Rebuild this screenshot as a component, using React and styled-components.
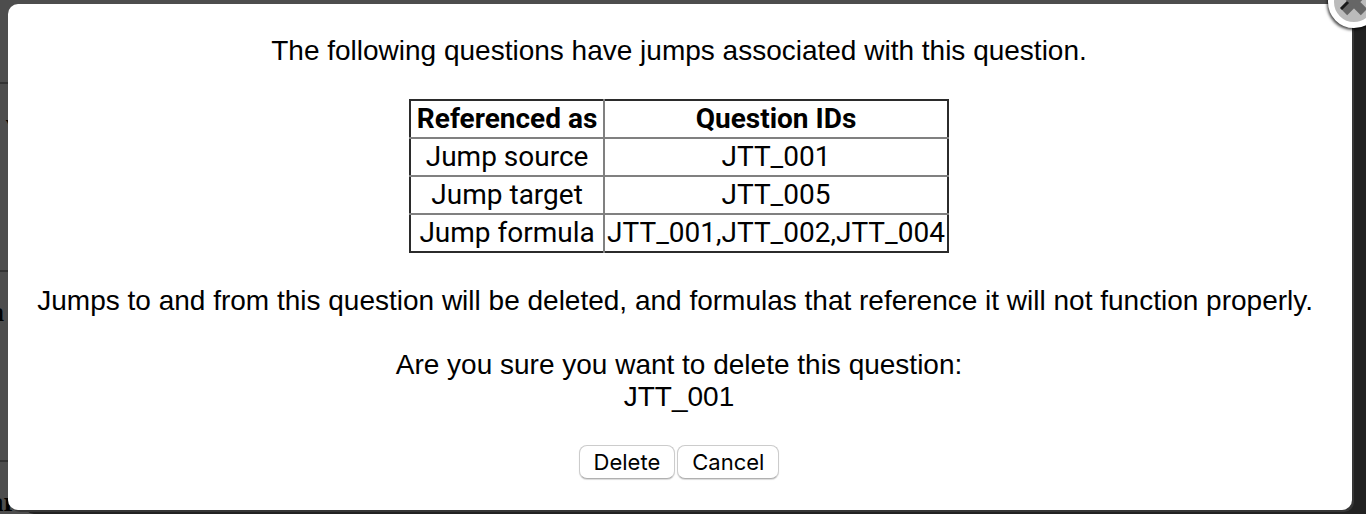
import React, { useState } from "react";
import styled, { createGlobalStyle } from "styled-components";

const GlobalStyle = createGlobalStyle`
	* {
		box-sizing: border-box;
	}

	body {
		margin: 0;
		background: #222222;
		color: #000000;
		font-family: "Liberation Sans", Arial, sans-serif;
		font-size: 28px;
		line-height: 32px;
	}
`;

const Screen = styled.div`
	position: relative;
	min-height: 100vh;
	padding: 4px 14px 4px 8px;
	overflow: hidden;
`;

const DimmedPage = styled.div`
	position: absolute;
	inset: 0;
	display: grid;
	grid-template-rows: 84px 188px 190px 1fr;
	margin-right: 38px;
	background: #4d4d4d;
	overflow: hidden;
`;

const DimmedRow = styled.div`
	display: flex;
	padding-top: 24px;
	border-bottom: 2px solid #333333;
	font-family: "Liberation Serif", serif;
	font-size: 28px;
	font-weight: bold;
`;

const DimmedText = styled.span`
	width: ${({ $width }) => $width}px;
	display: flex;
	justify-content: flex-end;
`;

const Dialog = styled.div`
	position: relative;
	display: flex;
	flex-direction: column;
	align-items: center;
	min-height: calc(100vh - 8px);
	padding: 31px 30px 31px 28px;
	background: #ffffff;
	border-radius: 10px;
	box-shadow: 2px 2px 0 #363636, 16px 4px 0 #222222;
	text-align: center;
`;

const Message = styled.p`
	margin: 0 0 32px;
`;

const JumpTable = styled.table`
	margin-bottom: 32px;
	border: 2px solid #2b2b2b;
	border-collapse: collapse;
	font-family: Roboto, sans-serif;
	font-size: 28px;
	line-height: 32px;

	tbody tr {
		border-top: 2px solid #808080;
	}
`;

const Cell = styled.td`
	min-width: 194px;
	padding: 2px;

	& + & {
		border-left: 2px solid #808080;
	}
`;

const HeadCell = styled(Cell)`
	font-weight: bold;
`;

const Actions = styled.div`
	display: flex;
	gap: 2px;
`;

const ActionButton = styled.button`
	height: 34px;
	padding: 0 14px;
	border: 1px solid #cccccc;
	border-bottom-color: #b0b0b0;
	border-radius: 8px;
	background: #ffffff;
	box-shadow: 0 1px 1px rgba(0, 0, 0, 0.15);
	color: #000000;
	font-family: Inter, sans-serif;
	font-size: 22px;
	line-height: 32px;
`;

const CloseButton = styled.button`
	position: absolute;
	top: -28px;
	right: -28px;
	display: flex;
	align-items: center;
	justify-content: center;
	width: 52px;
	height: 52px;
	padding: 0;
	border: 6px solid #ffffff;
	border-radius: 50%;
	background: #bbbbbb;
	box-shadow: -1px 2px 3px rgba(0, 0, 0, 0.7);
`;

const references = [
	{ label: "Jump source", ids: ["JTT_001"] },
	{ label: "Jump target", ids: ["JTT_005"] },
	{ label: "Jump formula", ids: ["JTT_001", "JTT_002", "JTT_004"] },
];

const CloseIcon = () => (
	<svg width="40" height="40" viewBox="0 0 40 40" aria-hidden="true">
		<path d="M10 10 L30 30 M30 10 L10 30" stroke="#666666" strokeWidth="9" />
		<path d="M7 27 L14 20" stroke="#1a1a1a" strokeWidth="3" />
	</svg>
);

export default function App() {
	const [open, setOpen] = useState(true);
	const close = () => setOpen(false);

	return (
		<>
			<GlobalStyle />
			<Screen>
				<DimmedPage aria-hidden="true">
					<DimmedRow />
					<DimmedRow>
						<DimmedText $width={20}>v</DimmedText>
					</DimmedRow>
					<DimmedRow>
						<DimmedText $width={4}>a</DimmedText>
					</DimmedRow>
					<DimmedRow>
						<DimmedText $width={16}>ar</DimmedText>
					</DimmedRow>
				</DimmedPage>
				{open && (
					<Dialog role="dialog" aria-modal="true">
						<Message>The following questions have jumps associated with this question.</Message>
						<JumpTable>
							<thead>
								<tr>
									<HeadCell as="th">Referenced as</HeadCell>
									<HeadCell as="th">Question IDs</HeadCell>
								</tr>
							</thead>
							<tbody>
								{references.map(({ label, ids }) => (
									<tr key={label}>
										<Cell>{label}</Cell>
										<Cell>{ids.join(",")}</Cell>
									</tr>
								))}
							</tbody>
						</JumpTable>
						<Message>
							Jumps to and from this question will be deleted, and formulas that reference it will not function properly.&nbsp;
						</Message>
						<Message>
							Are you sure you want to delete this question:
							<br />
							JTT_001
						</Message>
						<Actions>
							<ActionButton onClick={close}>Delete</ActionButton>
							<ActionButton onClick={close}>Cancel</ActionButton>
						</Actions>
						<CloseButton aria-label="Close" onClick={close}>
							<CloseIcon />
						</CloseButton>
					</Dialog>
				)}
			</Screen>
		</>
	);
}
